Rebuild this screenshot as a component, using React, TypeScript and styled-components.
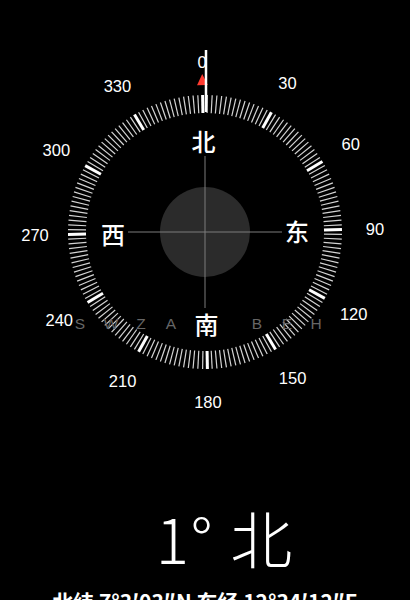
import React, { FC } from 'react';
import styled, { createGlobalStyle } from 'styled-components';

const GlobalStyle = createGlobalStyle`
  html, body {
    margin: 0;
    padding: 0;
    background: #000;
  }
  body {
    font-family: 'Liberation Sans', 'Noto Sans CJK SC', sans-serif;
  }
`;

const Page = styled.div`
  width: 410px;
  height: 600px;
  background: #000;
  color: #fff;
  display: flex;
  flex-direction: column;
  align-items: stretch;
  overflow: hidden;
`;
const DialSvg = styled.svg`
  display: block;
  width: 410px;
  height: 450px;
  flex-shrink: 0;
`;
const DegreeLabel = styled.text`
  font-family: 'Liberation Sans', sans-serif;
  font-size: 16.5px;
  fill: #fff;
`;
const CardinalLabel = styled.text`
  font-family: 'Noto Sans CJK SC', sans-serif;
  font-size: 24px;
  font-weight: 500;
  fill: #fff;
`;
const GhostLetter = styled.text`
  font-family: 'Liberation Sans', sans-serif;
  font-size: 15.5px;
  fill: #666;
`;
const Heading = styled.div`
  margin-top: 56px;
  padding-left: 40px;
  text-align: center;
  font-family: 'Noto Sans CJK SC', sans-serif;
  font-size: 62px;
  font-weight: 300;
  line-height: 1;
  letter-spacing: 2px;
`;
const Coords = styled.div`
  margin-top: 18px;
  text-align: center;
  font-family: 'Noto Sans CJK SC', 'Liberation Sans', sans-serif;
  font-size: 21px;
  font-weight: 700;
  white-space: nowrap;
`;

const CX = 205;
const CY = 232;
const ROT = -1;

const polar = (deg: number, r: number) => {
  const a = ((deg + ROT) * Math.PI) / 180;
  return { x: CX + r * Math.sin(a), y: CY - r * Math.cos(a) };
};

const ticks = Array.from({ length: 180 }, (_, i) => i * 2);
const degrees = [0, 30, 60, 90, 120, 150, 180, 210, 240, 270, 300, 330];
const cardinals = [
  { deg: 0, label: '北' },
  { deg: 90, label: '东' },
  { deg: 180, label: '南' },
  { deg: 270, label: '西' },
];
const ghosts = [
  { x: 80, ch: 'S' },
  { x: 111, ch: 'W' },
  { x: 141, ch: 'Z' },
  { x: 171, ch: 'A' },
  { x: 257, ch: 'B' },
  { x: 287, ch: 'E' },
  { x: 316, ch: 'H' },
];

const Dial: FC = () => {
  const tipA = polar(0, 158);
  const baseL = polar(-2.1, 147);
  const baseR = polar(2.1, 147);

  return (
    <DialSvg viewBox="0 0 410 450">
      <circle cx={CX} cy={CY} r={45} fill="#2b2b2b" />
      <line x1={128} y1={CY} x2={282} y2={CY} stroke="#7d7d7d" strokeWidth={1} />
      <line x1={CX} y1={156} x2={CX} y2={308} stroke="#7d7d7d" strokeWidth={1} />

      {ticks.map((d) => {
        const major = d % 30 === 0;
        const p1 = polar(d, 119);
        const p2 = polar(d, 137);
        return (
          <line
            key={d}
            x1={p1.x}
            y1={p1.y}
            x2={p2.x}
            y2={p2.y}
            stroke={major ? '#fff' : '#d4d4d4'}
            strokeWidth={major ? 3 : 1.2}
          />
        );
      })}

      {degrees.map((d) => {
        const p = polar(d, 170);
        return (
          <DegreeLabel key={d} x={p.x} y={p.y} textAnchor="middle" dominantBaseline="central">
            {d}
          </DegreeLabel>
        );
      })}

      {cardinals.map((c) => {
        const p = polar(c.deg, 92);
        return (
          <CardinalLabel key={c.deg} x={p.x} y={p.y} textAnchor="middle" dominantBaseline="central">
            {c.label}
          </CardinalLabel>
        );
      })}

      {ghosts.map((g) => (
        <GhostLetter key={g.ch} x={g.x} y={323} textAnchor="middle" dominantBaseline="central">
          {g.ch}
        </GhostLetter>
      ))}

      <polygon
        points={`${tipA.x},${tipA.y} ${baseL.x},${baseL.y} ${baseR.x},${baseR.y}`}
        fill="#ff3b30"
      />
      <line x1={CX + 1} y1={50} x2={CX + 1} y2={112} stroke="#fff" strokeWidth={2.5} />
    </DialSvg>
  );
};

const App: FC = () => (
  <>
    <GlobalStyle />
    <Page>
      <Dial />
      <Heading>1° 北</Heading>
      <Coords>北纬 7°3′03″N 东经 12°34′12″E</Coords>
    </Page>
  </>
);

export default App;
